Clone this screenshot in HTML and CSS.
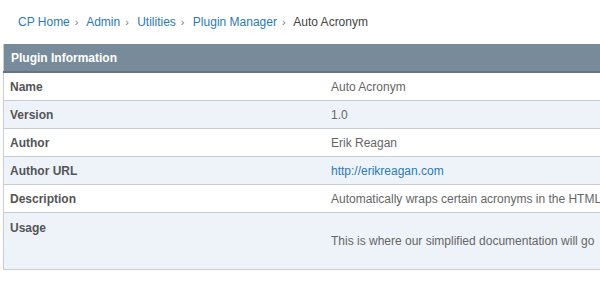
FILE: index.html
```html
<!DOCTYPE html>
<html lang="en">
<head>
    <meta charset="UTF-8">
    <meta name="viewport" content="width=device-width, initial-scale=1.0">
    <title>Plugin Manager - Auto Acronym</title>
    <link rel="stylesheet" href="styles.css">
</head>
<body>

<!-- Breadcrumb -->
<div class="breadcrumb">
    <a href="#">CP Home</a><span class="sep">&rsaquo;</span>
    <a href="#">Admin</a><span class="sep">&rsaquo;</span>
    <a href="#">Utilities</a><span class="sep">&rsaquo;</span>
    <a href="#">Plugin Manager</a><span class="sep">&rsaquo;</span>
    <span class="current">Auto Acronym</span>
</div>

<!-- Plugin Info Table -->
<div class="table-wrap">
<table class="plugin-table">
    <thead>
        <tr>
            <th colspan="2">Plugin Information</th>
        </tr>
    </thead>
    <tbody>
        <tr>
            <td class="label">Name</td>
            <td>Auto Acronym</td>
        </tr>
        <tr class="alt">
            <td class="label">Version</td>
            <td>1.0</td>
        </tr>
        <tr>
            <td class="label">Author</td>
            <td>Erik Reagan</td>
        </tr>
        <tr class="alt">
            <td class="label">Author URL</td>
            <td><a href="#">http://erikreagan.com</a></td>
        </tr>
        <tr>
            <td class="label">Description</td>
            <td>Automatically wraps certain acronyms in the HTML t</td>
        </tr>
        <tr class="alt usage">
            <td class="label">Usage</td>
            <td><p>This is where our simplified documentation will go</p></td>
        </tr>
    </tbody>
</table>
</div>

</body>
</html>
```

FILE: styles.css
```css
body {
    font-family: "Liberation Sans", Arial, sans-serif;
    background-color: #fff;
    margin: 0;
    padding: 0;
    overflow: hidden;
}

/* Breadcrumb */
.breadcrumb {
    padding: 15px 0 0 18px;
    height: 29px;
    font-size: 12px;
    line-height: 15px;
    color: #444;
    white-space: nowrap;
}

.breadcrumb a {
    color: #2a7ab8;
    text-decoration: none;
}

.breadcrumb .sep {
    color: #777;
    font-size: 11px;
    margin: 0 5px;
}

/* Plugin table */
.table-wrap {
    width: 597px;
    margin-left: 3px;
    overflow: hidden;
}

.plugin-table {
    width: 780px;
    border-collapse: collapse;
    border-left: 1px solid #c8cdd3;
    font-size: 12px;
}

.plugin-table th {
    background-color: #788b9b;
    border-bottom: 2px solid #617587;
    color: #fff;
    text-align: left;
    font-weight: bold;
    height: 27px;
    padding: 0 7px;
}

.plugin-table td {
    height: 27px;
    padding: 0 6px;
    color: #666;
    border-bottom: 1px solid #c9ced4;
    vertical-align: middle;
    white-space: nowrap;
}

.plugin-table td.label {
    width: 309px;
    color: #555;
    font-weight: bold;
}

.plugin-table tr.alt td {
    background-color: #eef3fa;
}

.plugin-table td a {
    color: #2a7ab8;
    text-decoration: none;
}

.plugin-table tr.usage td {
    height: 48px;
    vertical-align: top;
    padding-top: 8px;
}

.plugin-table tr.usage p {
    margin: 13px 0 0;
}
```
